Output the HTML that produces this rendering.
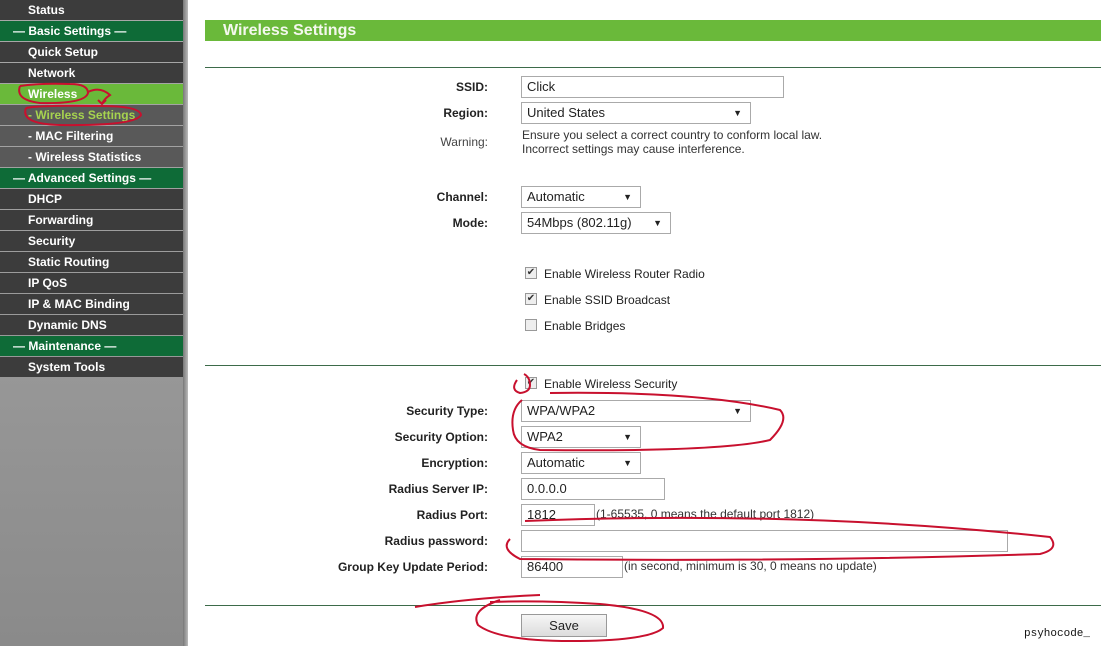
<!DOCTYPE html>
<html><head><meta charset="utf-8"><style>
*{margin:0;padding:0;box-sizing:border-box}
body{width:1101px;height:646px;overflow:hidden;background:#fff;font-family:"Liberation Sans",Arial,sans-serif;position:relative}
#side{position:absolute;left:0;top:0;width:183px;height:646px;background:linear-gradient(#a9a9a9,#8a8a8a)}
#edge{position:absolute;left:183px;top:0;width:5px;height:646px;background:linear-gradient(90deg,#777,#bbb)}
.m{position:absolute;left:0;width:183px;height:20px;font-size:12px;font-weight:bold;color:#fff;line-height:20px;padding-left:28px}
.d{background:#3c3c3c}.g{background:#0e6b37;padding-left:13px}.a{background:#6ab93a}.s{background:#595959}
.l{position:absolute;font-size:12px;font-weight:bold;color:#222;text-align:right;width:300px;left:188px}
.t{position:absolute;font-size:12px;color:#222}
.i{position:absolute;border:1px solid #aaa;background:#fff;height:22px;font-size:13px;line-height:20px;padding-left:5px;color:#222}
.i b{position:absolute;right:8px;top:0;font-size:9px;font-weight:normal}
.hr{position:absolute;left:205px;width:896px;height:1px;background:#3d6b4a}
.cb{position:absolute;left:525px;width:12px;height:12px;border:1px solid #999;background:#eee;font-size:10px;line-height:10px;text-align:center;color:#333}
</style></head><body>
<div id="side"></div><div id="edge"></div>
<div class="m d" style="top:0">Status</div>
<div class="m g" style="top:21px">— Basic Settings —</div>
<div class="m d" style="top:42px">Quick Setup</div>
<div class="m d" style="top:63px">Network</div>
<div class="m a" style="top:84px">Wireless</div>
<div class="m s" style="top:105px;color:#a6d34f">- Wireless Settings</div>
<div class="m s" style="top:126px">- MAC Filtering</div>
<div class="m s" style="top:147px">- Wireless Statistics</div>
<div class="m g" style="top:168px">— Advanced Settings —</div>
<div class="m d" style="top:189px">DHCP</div>
<div class="m d" style="top:210px">Forwarding</div>
<div class="m d" style="top:231px">Security</div>
<div class="m d" style="top:252px">Static Routing</div>
<div class="m d" style="top:273px">IP QoS</div>
<div class="m d" style="top:294px">IP &amp; MAC Binding</div>
<div class="m d" style="top:315px">Dynamic DNS</div>
<div class="m g" style="top:336px">— Maintenance —</div>
<div class="m d" style="top:357px">System Tools</div>

<div style="position:absolute;left:205px;top:20px;width:896px;height:21px;background:#6ab93a;color:#f4f8ee;font-weight:bold;font-size:16px;line-height:21px;padding-left:18px">Wireless Settings</div>
<div class="hr" style="top:67px"></div>

<div class="l" style="top:80px">SSID:</div><div class="i" style="left:521px;top:76px;width:263px">Click</div>
<div class="l" style="top:106px">Region:</div><div class="i" style="left:521px;top:102px;width:230px">United States<b>▼</b></div>
<div class="l" style="top:135px;font-weight:normal;color:#444">Warning:</div>
<div class="t" style="left:522px;top:128px;line-height:14px;color:#333">Ensure you select a correct country to conform local law.<br>Incorrect settings may cause interference.</div>
<div class="l" style="top:190px">Channel:</div><div class="i" style="left:521px;top:186px;width:120px">Automatic<b>▼</b></div>
<div class="l" style="top:216px">Mode:</div><div class="i" style="left:521px;top:212px;width:150px">54Mbps (802.11g)<b>▼</b></div>

<div class="cb" style="top:267px">✔</div><div class="t" style="left:544px;top:267px">Enable Wireless Router Radio</div>
<div class="cb" style="top:293px">✔</div><div class="t" style="left:544px;top:293px">Enable SSID Broadcast</div>
<div class="cb" style="top:319px"></div><div class="t" style="left:544px;top:319px">Enable Bridges</div>
<div class="hr" style="top:365px"></div>
<div class="cb" style="top:377px">✔</div><div class="t" style="left:544px;top:377px">Enable Wireless Security</div>

<div class="l" style="top:404px">Security Type:</div><div class="i" style="left:521px;top:400px;width:230px">WPA/WPA2<b>▼</b></div>
<div class="l" style="top:430px">Security Option:</div><div class="i" style="left:521px;top:426px;width:120px">WPA2<b>▼</b></div>
<div class="l" style="top:456px">Encryption:</div><div class="i" style="left:521px;top:452px;width:120px">Automatic<b>▼</b></div>
<div class="l" style="top:482px">Radius Server IP:</div><div class="i" style="left:521px;top:478px;width:144px">0.0.0.0</div>
<div class="l" style="top:508px">Radius Port:</div><div class="i" style="left:521px;top:504px;width:74px">1812</div>
<div class="t" style="left:596px;top:507px;color:#333">(1-65535, 0 means the default port 1812)</div>
<div class="l" style="top:534px">Radius password:</div><div class="i" style="left:521px;top:530px;width:487px"></div>
<div class="l" style="top:560px">Group Key Update Period:</div><div class="i" style="left:521px;top:556px;width:102px">86400</div>
<div class="t" style="left:624px;top:559px;color:#333">(in second, minimum is 30, 0 means no update)</div>
<div class="hr" style="top:605px"></div>
<div style="position:absolute;left:521px;top:614px;width:86px;height:23px;border:1px solid #999;background:linear-gradient(#f6f6f6,#dcdcdc);font-size:13px;text-align:center;line-height:21px;color:#222">Save</div>
<div style="position:absolute;left:1024px;top:628px;font-family:'Liberation Mono',monospace;font-size:11px;color:#111">psyhocode_</div>

<svg width="1101" height="646" style="position:absolute;left:0;top:0" fill="none" stroke="#c8102e" stroke-width="2">
<path d="M20 86 Q15 100 40 103 Q85 104 88 93 Q88 84 70 84 Q40 83 20 86"/>
<path d="M88 92 Q100 86 110 95 Q104 99 102 104 M98 100 l4 4 l4 -4"/>
<path d="M26 108 Q20 124 60 125 Q135 126 141 115 Q140 106 100 106 Q40 105 26 108"/>
<path d="M517 380 Q510 390 520 393 Q530 392 530 385 Q530 377 524 374"/>
<path d="M550 393 Q700 391 780 410 Q790 420 770 440 Q720 452 540 450 Q515 447 513 430 Q510 410 522 400"/>
<path d="M525 521 Q800 510 1050 537 Q1060 549 1040 554 Q800 562 520 559 Q500 549 510 539"/>
<path d="M415 607 Q470 598 540 595 M500 600 Q470 610 478 625 Q500 642 580 641 Q650 640 663 628 Q665 610 600 604 Q540 600 490 602"/>
</svg>
</body></html>
